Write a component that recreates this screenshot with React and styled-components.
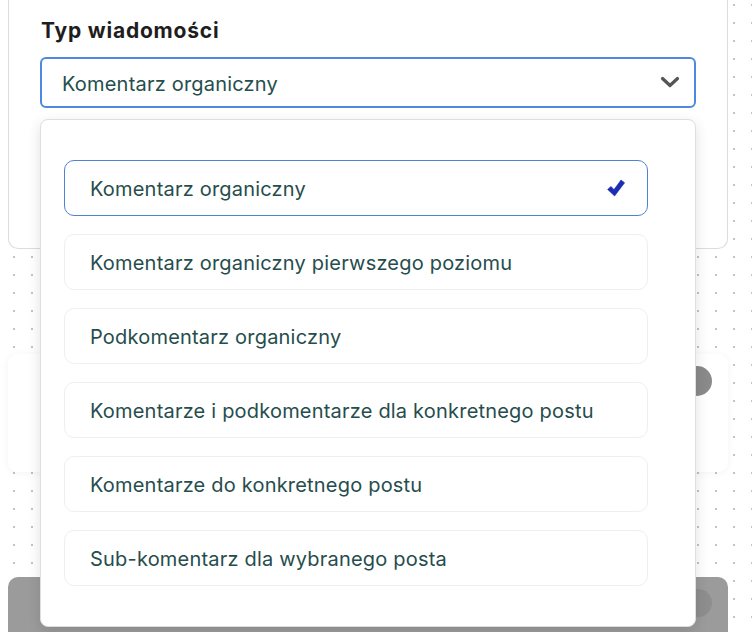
import React from "react";
import styled, { createGlobalStyle } from "styled-components";

const Global = createGlobalStyle`
  html, body { margin: 0; padding: 0; }
  body {
    width: 752px;
    height: 632px;
    overflow: hidden;
    background-color: #ffffff;
    background-image: radial-gradient(circle, #c4c4c4 1px, transparent 1.3px);
    background-size: 18px 18px;
    background-position: 5px -4px;
    font-family: Inter, "Noto Sans", sans-serif;
  }
`;

const Page = styled.div`
  position: relative;
  display: flex;
  flex-direction: column;
  gap: 105px;
  padding: 0 24px 0 8px;
`;

const FormCard = styled.div`
  height: 249px;
  box-sizing: border-box;
  padding: 18px 31px 0 31px;
  position: relative;
  background: #ffffff;
  border: 1px solid #dcdcdc;
  border-top: none;
  border-radius: 0 0 10px 10px;
`;

const InfoCard = styled.div`
  height: 118px;
  background: #ffffff;
  border-radius: 10px;
  box-shadow: 0 1px 8px rgba(0, 0, 0, 0.05);
  display: flex;
  justify-content: flex-end;
  padding: 12px 16px 0 0;
  box-sizing: border-box;
`;

const GrayCard = styled.div`
  height: 80px;
  background: #9b9b9b;
  border-radius: 10px 10px 0 0;
  display: flex;
  justify-content: flex-end;
  padding: 12px 16px 0 0;
  box-sizing: border-box;
`;

const Avatar = styled.div`
  width: ${(p) => p.$size}px;
  height: ${(p) => p.$size}px;
  border-radius: 50%;
  background: ${(p) => p.$color};
`;

const Label = styled.div`
  font-size: 21px;
  font-weight: 700;
  color: #1e1e1e;
  line-height: 26px;
  margin-left: 1px;
  margin-bottom: 13px;
  letter-spacing: 0.8px;
`;

const Select = styled.div`
  height: 51px;
  box-sizing: border-box;
  border: 2px solid #4d88e3;
  border-radius: 6px;
  display: flex;
  align-items: center;
  justify-content: space-between;
  padding: 2px 14px 0 20px;
  font-size: 20px;
  letter-spacing: 0.2px;
  color: #264d4d;
`;

const ChevronBox = styled.svg`
  margin-top: -3px;
`;

const Chevron = () => (
  <ChevronBox width="20" height="12" viewBox="0 0 20 12">
    <path d="M2.5 2.5 L10 9.5 L17.5 2.5" fill="none" stroke="#555" strokeWidth="3.2" strokeLinecap="round" strokeLinejoin="round" />
  </ChevronBox>
);

const Dropdown = styled.div`
  position: absolute;
  left: 31px;
  right: 31px;
  top: 119px;
  height: 508px;
  box-sizing: border-box;
  background: #ffffff;
  border: 1px solid #dedede;
  border-radius: 8px;
  box-shadow: 0 4px 14px rgba(0, 0, 0, 0.12);
  padding: 40px 47px 0 23px;
  display: flex;
  flex-direction: column;
  gap: 18px;
  z-index: 10;
`;

const Option = styled.div`
  height: 56px;
  box-sizing: border-box;
  border: 1px solid ${(p) => (p.$selected ? "#4f82d2" : "#efefef")};
  border-radius: 10px;
  display: flex;
  align-items: center;
  justify-content: space-between;
  padding: 2px 22px 0 25px;
  font-size: 20px;
  letter-spacing: 0.2px;
  color: #264d4d;
`;

const CheckBox = styled.svg`
  margin-top: -2px;
`;

const Check = () => (
  <CheckBox width="18" height="18" viewBox="0 0 18 18">
    <path d="M0.6 10.4 L4 7.4 L7 10.6 L14 1 L17.6 3.8 L7.6 17 Z" fill="#1c2db3" stroke="#1c2db3" strokeWidth="0.6" strokeLinejoin="round" />
  </CheckBox>
);

const options = [
  "Komentarz organiczny",
  "Komentarz organiczny pierwszego poziomu",
  "Podkomentarz organiczny",
  "Komentarze i podkomentarze dla konkretnego postu",
  "Komentarze do konkretnego postu",
  "Sub-komentarz dla wybranego posta",
];

export default function App() {
  return (
    <>
      <Global />
      <Page>
        <FormCard>
          <Label>Typ wiadomości</Label>
          <Select>
            <span>Komentarz organiczny</span>
            <Chevron />
          </Select>
          <Dropdown>
            {options.map((o, i) => (
              <Option key={o} $selected={i === 0}>
                <span>{o}</span>
                {i === 0 && <Check />}
              </Option>
            ))}
          </Dropdown>
        </FormCard>
        <InfoCard>
          <Avatar $size={30} $color="#8a8a8a" />
        </InfoCard>
        <GrayCard>
          <Avatar $size={28} $color="#8e8e8e" />
        </GrayCard>
      </Page>
    </>
  );
}
